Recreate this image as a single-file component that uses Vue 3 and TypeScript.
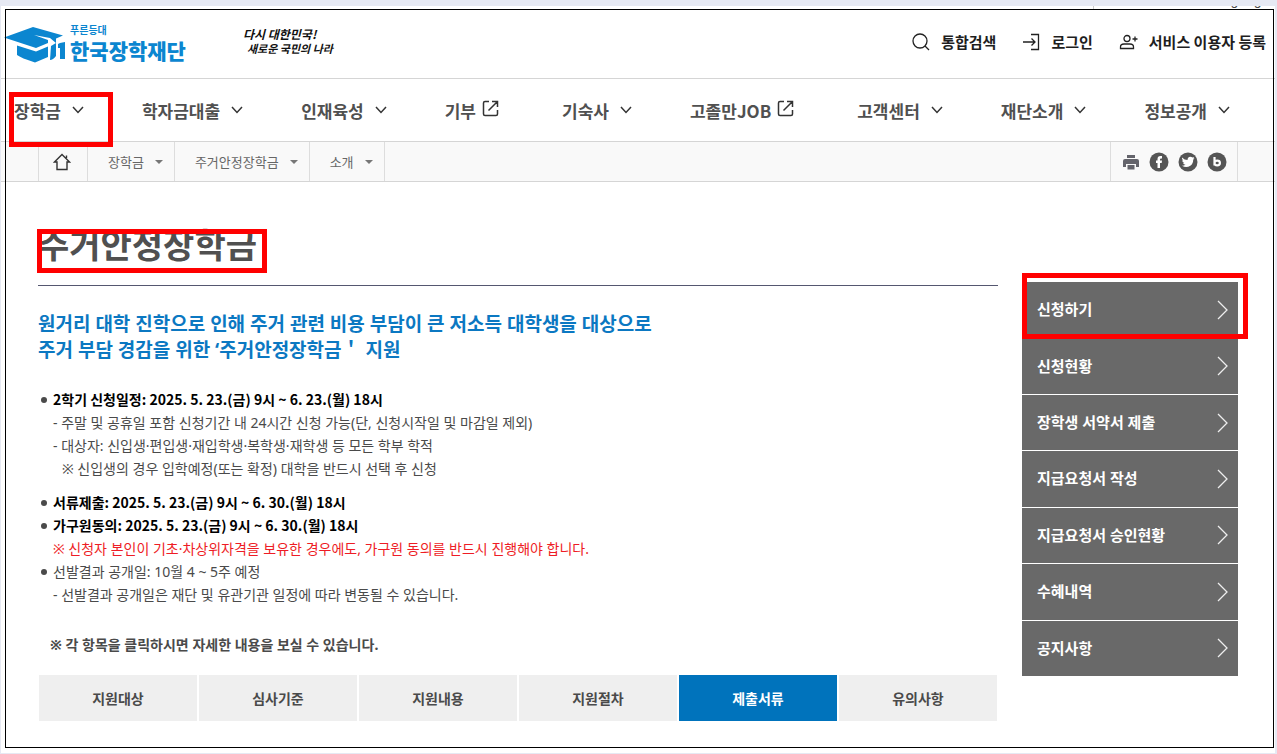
<script setup lang="ts">
interface NavItem {
  label: string
  external?: boolean
  marked?: boolean
}
interface Notice {
  text: string
  kind: 'strong' | 'bullet' | 'sub' | 'note' | 'alert'
  spaced?: boolean
}

const navItems: NavItem[] = [
  { label: '장학금', marked: true },
  { label: '학자금대출' },
  { label: '인재육성' },
  { label: '기부', external: true },
  { label: '기숙사' },
  { label: '고졸만JOB', external: true },
  { label: '고객센터' },
  { label: '재단소개' },
  { label: '정보공개' },
]
const crumbs: string[] = ['장학금', '주거안정장학금', '소개']
const notices: Notice[] = [
  { kind: 'strong', text: '2학기 신청일정: 2025. 5. 23.(금) 9시 ~ 6. 23.(월) 18시' },
  { kind: 'sub', text: '- 주말 및 공휴일 포함 신청기간 내 24시간 신청 가능(단, 신청시작일 및 마감일 제외)' },
  { kind: 'sub', text: '- 대상자: 신입생·편입생·재입학생·복학생·재학생 등 모든 학부 학적' },
  { kind: 'note', text: '※ 신입생의 경우 입학예정(또는 확정) 대학을 반드시 선택 후 신청' },
  { kind: 'strong', text: '서류제출: 2025. 5. 23.(금) 9시 ~ 6. 30.(월) 18시', spaced: true },
  { kind: 'strong', text: '가구원동의: 2025. 5. 23.(금) 9시 ~ 6. 30.(월) 18시' },
  { kind: 'alert', text: '※ 신청자 본인이 기초·차상위자격을 보유한 경우에도, 가구원 동의를 반드시 진행해야 합니다.' },
  { kind: 'bullet', text: '선발결과 공개일: 10월 4 ~ 5주 예정' },
  { kind: 'sub', text: '- 선발결과 공개일은 재단 및 유관기관 일정에 따라 변동될 수 있습니다.' },
]
const tabs: string[] = ['지원대상', '심사기준', '지원내용', '지원절차', '제출서류', '유의사항']
const activeTab = '제출서류'
const quickLinks: string[] = [
  '신청하기',
  '신청현황',
  '장학생 서약서 제출',
  '지급요청서 작성',
  '지급요청서 승인현황',
  '수혜내역',
  '공지사항',
]
</script>

<template>
  <div class="page">
    <div class="top-strip"><a href="#" class="language">Language</a></div>

    <header class="header">
      <a href="#" class="logo">
        <svg class="logo-mark" viewBox="0 0 62 38" width="62" height="38" aria-hidden="true">
          <path d="M0 11.500 29 1 59 9.500 52 12.500 52 17 46 12 30 9 44 14 44 17 32 22Z" fill="#0b86d0" />
          <path d="M13 19.500 32 25.500 44 20.500 44 31 31 36.500Q17 32 13 29Z" fill="#0b86d0" />
          <path d="M47 20 52 17V30Q49 34 46 34Z" fill="#0b86d0" />
          <path d="M56 17 61 16V33H56V22H54V18Z" fill="#0b86d0" />
        </svg>
        <span class="logo-text">
          <small>푸른등대</small>
          <b>한국장학재단</b>
        </span>
      </a>
      <p class="slogan"><span>다시 대한민국!</span><span class="slogan-second">새로운 국민의 나라</span></p>
      <div class="utilities">
        <button type="button">
          <svg viewBox="0 0 18 18" width="18" height="18" aria-hidden="true">
            <circle cx="8" cy="8" r="7" /><path d="m13 13 4 4" />
          </svg>
          통합검색
        </button>
        <a href="#">
          <svg viewBox="0 0 18 18" width="18" height="18" aria-hidden="true">
            <path d="M9 1.500h7.500v15H9M1 9h12M9.500 5.500 13 9l-3.500 3.500" />
          </svg>
          로그인
        </a>
        <a href="#">
          <svg viewBox="0 0 19 18" width="19" height="18" aria-hidden="true">
            <circle cx="8" cy="5.500" r="3" /><path d="M1.500 15.500v-1.500q0-3 3.500-3h6q3.500 0 3.500 3v1.500ZM16 3.500v5M13.500 6h5" />
          </svg>
          서비스 이용자 등록
        </a>
      </div>
    </header>

    <nav class="main-nav">
      <a v-for="item in navItems" :key="item.label" href="#">
        {{ item.label }}
        <svg v-if="item.external" class="external" viewBox="0 0 17 17" width="17" height="17" aria-hidden="true">
          <path d="M7 1.500H3q-1.500 0-1.500 1.500v11q0 1.500 1.500 1.500h11q1.500 0 1.500-1.500v-4M10 1.500h5.500V7M15.500 1.500 6.500 10.500" />
        </svg>
        <svg v-else class="chevron" viewBox="0 0 12 8" width="12" height="8" aria-hidden="true">
          <path d="m1 1 5 5.500L11 1" />
        </svg>
        <span v-if="item.marked" class="frame frame-nav"></span>
      </a>
    </nav>

    <div class="crumb-bar">
      <a href="#" class="home" aria-label="홈">
        <svg viewBox="0 0 18 18" width="18" height="18" aria-hidden="true">
          <path d="M1.500 9 9 1.500 16.500 9H14v7.500H4V9ZM13.500 2.500V5" />
        </svg>
      </a>
      <button v-for="crumb in crumbs" :key="crumb" type="button" class="crumb">
        {{ crumb }}<i></i>
      </button>
      <div class="share">
        <button type="button" aria-label="인쇄">
          <svg viewBox="0 0 18 18" width="18" height="18" fill="#64646b" aria-hidden="true">
            <path d="M5 2h8v3H5ZM3 6h12q2 0 2 2v6h-3v-3H4v3H1V8q0-2 2-2ZM5.500 12h7v4.500h-7Z" />
          </svg>
        </button>
        <a href="#" aria-label="페이스북">
          <svg viewBox="0 0 20 20" width="20" height="20" aria-hidden="true">
            <circle cx="10" cy="10" r="9.500" fill="#555" />
            <path d="M8.500 16v-5H7V8.500h1.500V7q0-3 3-3H13v2.500h-1q-1 0-1 1v1h2l-.3 2.500H11v5Z" fill="#fff" />
          </svg>
        </a>
        <a href="#" aria-label="트위터">
          <svg viewBox="0 0 20 20" width="20" height="20" aria-hidden="true">
            <circle cx="10" cy="10" r="9.500" fill="#555" />
            <path d="M4 5.500q2.500 2.500 5.500 2.500 0-3 2.800-3.300 1.200 0 2.200.9l1.700-.6-.9 1.500 1.200-.2-1.300 1.500q0 4-2.900 6-4 2.500-8.300 0 2 0 3.500-1-2-.3-2.400-1.900h1.200Q4.200 10.200 4.200 8.200l1 .3Q3.500 7 4 5.500Z" fill="#fff" />
          </svg>
        </a>
        <a href="#" aria-label="블로그">
          <svg viewBox="0 0 20 20" width="20" height="20" aria-hidden="true">
            <circle cx="10" cy="10" r="9.500" fill="#555" />
            <path d="M7.500 5v8.500M7.500 11a2.700 2.300 0 1 0 5.400 0 2.700 2.300 0 1 0-5.400 0" fill="none" stroke="#fff" stroke-width="2.200" />
          </svg>
        </a>
      </div>
    </div>

    <div class="body">
      <main class="content">
        <h1>주거안정장학금<span class="frame frame-title"></span></h1>
        <p class="lead">
          원거리 대학 진학으로 인해 주거 관련 비용 부담이 큰 저소득 대학생을 대상으로<br />
          주거 부담 경감을 위한 ‘주거안정장학금＇ 지원
        </p>
        <ul class="notices">
          <li v-for="notice in notices" :key="notice.text" :class="[notice.kind, { spaced: notice.spaced }]">
            {{ notice.text }}
          </li>
        </ul>
        <p class="hint">※ 각 항목을 클릭하시면 자세한 내용을 보실 수 있습니다.</p>
        <div class="tabs" role="tablist">
          <button
            v-for="tab in tabs"
            :key="tab"
            type="button"
            role="tab"
            :aria-selected="tab === activeTab"
            :class="{ active: tab === activeTab }"
          >
            {{ tab }}
          </button>
        </div>
      </main>
      <aside class="quick">
        <a v-for="link in quickLinks" :key="link" href="#">
          <span>{{ link }}</span>
          <svg viewBox="0 0 11 20" width="11" height="20" aria-hidden="true">
            <path d="m1 1 9 9-9 9" />
          </svg>
        </a>
        <span class="frame frame-quick"></span>
      </aside>
    </div>
    <div class="outline"></div>
  </div>
</template>

<style>
body {
  background: #fff;
}
</style>

<style scoped>
* {
  box-sizing: border-box;
}
.page {
  position: relative;
  min-height: 100vh;
  border: solid #e6e9f3;
  border-width: 6px 2px 1px 1px;
  font-family: "Noto Sans CJK KR", "Noto Sans", sans-serif;
  font-size: 14px;
  color: #4a4a4a;
}
a {
  color: inherit;
  text-decoration: none;
}
button {
  font: inherit;
  color: inherit;
  background: none;
  border: 0;
  padding: 0;
}
p,
h1,
ul {
  margin: 0;
  padding: 0;
}
svg {
  flex: none;
  display: block;
}
.outline {
  position: absolute;
  inset: 3px 1px 5px 4px;
  border: 1px solid #000;
  pointer-events: none;
}
.frame {
  position: absolute;
  border: 5px solid #f00;
  pointer-events: none;
}
.top-strip {
  display: flex;
  justify-content: flex-end;
  align-items: flex-end;
  height: 3px;
  overflow: hidden;
}
.language {
  width: 182px;
  padding-right: 6px;
  border-left: 1px solid #ccc;
  font-family: Roboto, sans-serif;
  font-size: 14px;
  line-height: 18px;
  text-align: right;
}
.header {
  display: flex;
  align-items: flex-start;
  height: 70px;
  padding: 14px 9px 0 3px;
  border-bottom: 1px solid #d5d5d5;
}
.logo {
  display: flex;
  color: #0b86d0;
}
.logo-mark {
  margin-top: 3px;
}
.logo-text {
  display: flex;
  flex-direction: column;
  margin-left: 4px;
}
.logo-text small {
  font-size: 10px;
  font-weight: 700;
  line-height: 14px;
}
.logo-text b {
  font-size: 21px;
  font-weight: 900;
  line-height: 26px;
}
.slogan {
  display: flex;
  flex-direction: column;
  margin: 3px 0 0 57px;
  font-size: 12px;
  font-weight: 700;
  font-style: italic;
  line-height: 15px;
  color: #111;
}
.slogan-second {
  padding-left: 4px;
  font-size: 11px;
}
.utilities {
  display: flex;
  gap: 26px;
  margin-left: auto;
  padding-top: 8px;
  font-size: 15px;
  font-weight: 700;
  line-height: 22px;
  color: #1e1e1e;
}
.utilities > * {
  display: flex;
  align-items: center;
  gap: 11px;
}
.utilities svg {
  fill: none;
  stroke: #222;
  stroke-width: 1.3;
}
.main-nav {
  display: flex;
  justify-content: space-between;
  height: 63px;
  padding: 0 45px 0 13px;
  border-bottom: 1px solid #d5d5d5;
  font-size: 17px;
  font-weight: 700;
  color: #505050;
}
.main-nav a {
  position: relative;
  display: flex;
  align-items: center;
}
.main-nav svg {
  fill: none;
  stroke: #333;
  stroke-width: 1.5;
}
.chevron {
  margin-left: 11px;
}
.external {
  margin: 0 5px 4px 6px;
}
.frame-nav {
  top: 13px;
  left: -5px;
  width: 104px;
  height: 55px;
  z-index: 2;
}
.crumb-bar {
  display: flex;
  height: 40px;
  padding: 0 37px;
  background: #f9f9f9;
  border-bottom: 1px solid #d5d5d5;
  font-size: 13px;
  color: #666;
}
.home {
  display: flex;
  align-items: center;
  justify-content: center;
  width: 50px;
  padding-right: 2px;
  border: solid #ddd;
  border-width: 0 1px;
}
.home svg {
  fill: none;
  stroke: #333;
  stroke-width: 1.4;
}
.crumb {
  display: flex;
  align-items: center;
  padding: 0 11px 0 20px;
  border-right: 1px solid #ddd;
}
.crumb i {
  margin-left: 11px;
  border: 4px solid transparent;
  border-top-color: #777;
  border-bottom-width: 0;
}
.share {
  display: flex;
  align-items: center;
  gap: 9px;
  margin-left: auto;
  padding: 0 10px 0 11px;
  border: solid #ddd;
  border-width: 0 1px;
}
.body {
  display: flex;
  align-items: flex-start;
  gap: 24px;
  padding: 40px 37px 23px;
}
.content {
  flex: 1;
}
h1 {
  position: relative;
  padding-bottom: 20px;
  border-bottom: 1px solid #555770;
  font-size: 34px;
  font-weight: 700;
  line-height: 43px;
  color: #505050;
}
.frame-title {
  top: 7px;
  left: -1px;
  width: 230px;
  height: 44px;
}
.lead,
.sub,
.note,
.alert,
.bullet,
.hint,
.quick {
  font-family: "Noto Sans", "Noto Sans CJK KR", sans-serif;
}
.lead {
  padding: 25px 0 0;
  font-size: 19px;
  font-weight: 700;
  line-height: 26px;
  color: #0b78c2;
}
.notices {
  padding: 25px 0 0 15px;
  list-style: none;
  line-height: 23px;
}
.strong,
.bullet {
  position: relative;
}
.strong {
  font-weight: 700;
  color: #000;
}
.strong::before,
.bullet::before {
  content: "";
  position: absolute;
  top: 9px;
  left: -12px;
  width: 6px;
  height: 6px;
  border-radius: 50%;
  background: #4a4a4a;
}
.note {
  padding-left: 9px;
}
.spaced {
  padding-top: 11px;
}
.spaced::before {
  top: 20px;
}
.alert {
  color: #ee1c25;
}
.hint {
  padding: 27px 0 0 12px;
  font-weight: 700;
  line-height: 23px;
}
.tabs {
  display: grid;
  grid-template-columns: repeat(6, 1fr);
  gap: 2px;
  margin-top: 19px;
  padding: 0 1px;
}
.tabs button {
  padding: 12px 0;
  background: #efefef;
  font-weight: 700;
  line-height: 22px;
}
.tabs .active {
  background: #0073bc;
  color: #fff;
}
.quick {
  position: relative;
  display: grid;
  grid-auto-rows: 1fr;
  gap: 1px;
  width: 216px;
  min-height: 394px;
  margin-top: 60px;
  font-size: 15px;
  font-weight: 700;
  color: #fff;
}
.quick a {
  display: flex;
  align-items: center;
  justify-content: space-between;
  padding: 0 10px 0 15px;
  background: #696969;
}
.quick a span {
  padding-bottom: 2px;
}
.quick svg {
  fill: none;
  stroke: #eee;
  stroke-width: 1.3;
}
.frame-quick {
  top: -9px;
  left: 0;
  width: 226px;
  height: 66px;
}
</style>
